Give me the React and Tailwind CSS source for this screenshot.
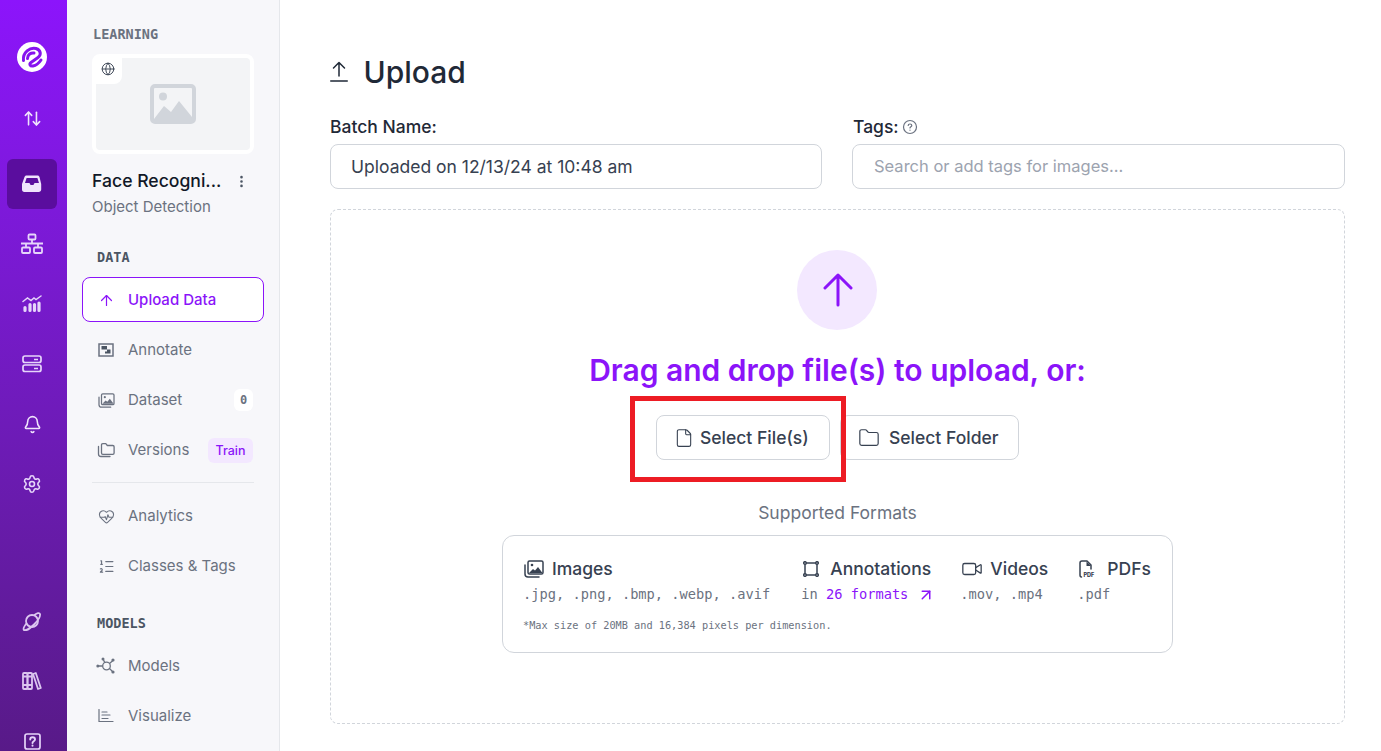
import { ArrowUp, ArrowUpDown, ArrowUpRight, Bell, EllipsisVertical, File, Folder, Globe, HeartPulse, ListOrdered, Settings, Video } from "lucide-react";

function Logo() {
  return (
    <svg width="30" height="30" viewBox="0 0 30 30" fill="none">
      <circle cx="15" cy="15" r="15" fill="white" />
      <path d="M6.500 18.500 C5.500 10.500 13 5 19 6.500 C24 8 24.500 13 21 15.500 L14 20.500 C12 22 13 24.500 16 24 C19 23.500 22 21 24 18" stroke="#8612ef" strokeWidth="3" strokeLinecap="round" />
      <path d="M10.500 16.500 C10.500 12.500 14 10.500 17 11" stroke="#8612ef" strokeWidth="3" strokeLinecap="round" />
    </svg>
  );
}

function InboxIcon() {
  return (
    <svg width="20" height="20" viewBox="0 0 20 20">
      <path fillRule="evenodd" fill="#efe3fc" d="M4.500 1.500h11c1 0 1.700.6 2 1.500l1.700 7v5.500c0 1.400-1.100 2.500-2.500 2.500H2.300C.9 18 0 16.900 0 15.500V10l2.500-7c.3-.9 1-1.500 2-1.500zM4.600 4 3 9h4c.5 0 .8.3 1 .7l.5 1.300h3l.5-1.300c.2-.4.5-.7 1-.7h4l-1.600-5H4.600z" />
    </svg>
  );
}

function NetworkIcon() {
  return (
    <svg width="24" height="22" viewBox="0 0 24 22" fill="none" stroke="#e6d5fa" strokeWidth="1.800">
      <rect x="8.500" y="1.500" width="7" height="5" rx="1" />
      <rect x="2" y="14.500" width="8" height="5.500" rx="1" />
      <rect x="14" y="14.500" width="8" height="5.500" rx="1" />
      <path d="M12 6.500v4M1 10.500h22" />
      <path d="M6 10.500v4M18 10.500v4" />
    </svg>
  );
}

function ChartIcon() {
  return (
    <svg width="20" height="18" viewBox="0 0 20 18" fill="none" stroke="#e6d5fa" strokeWidth="1.500" strokeLinecap="round">
      <path d="M1 6.500l4.500-3.500 3.500 2.500 3-2.500 2 1.500L19 1" />
      <path d="M3 12.500v3M8 9.500v6M12.500 9.500v6M17 8v7.500" strokeWidth="3.200" />
    </svg>
  );
}

function ServerIcon() {
  return (
    <svg width="20" height="18" viewBox="0 0 20 18" fill="none" stroke="#e6d5fa" strokeWidth="1.700">
      <rect x="1" y="1" width="18" height="6.500" rx="2" />
      <rect x="1" y="10" width="18" height="6.500" rx="2" />
      <path d="M12 4.500h4M12 13.500h4" strokeWidth="1.300" />
    </svg>
  );
}

function PlanetIcon() {
  return (
    <svg width="20" height="20" viewBox="0 0 20 20" fill="none" stroke="#dcc6f0" strokeWidth="1.800" strokeLinecap="round">
      <circle cx="10" cy="10" r="6" />
      <path d="M4.500 12.500 C2 15.500 1 18 2 19 C3.500 20 8 17.500 12 13.500 C16 9.500 18.500 5 18 3 C17.500 1.500 15 2 12.500 4" />
    </svg>
  );
}

function LibraryIcon() {
  return (
    <svg width="20" height="18" viewBox="0 0 20 18" fill="none" stroke="#dcc6f0" strokeWidth="1.800" strokeLinejoin="round">
      <rect x="1" y="1" width="4.500" height="16" rx="1" />
      <rect x="5.500" y="1" width="4.500" height="16" rx="1" />
      <path d="M11 2l2.800-1 5 15-2.800 1z" />
      <path d="M1 4.500h9M1 13h9" />
    </svg>
  );
}

function HelpIcon() {
  return (
    <svg width="17" height="17" viewBox="0 0 17 17" fill="none" stroke="#e6d5fa" strokeWidth="1.700" strokeLinecap="round">
      <rect x="1" y="1" width="15" height="15" rx="2" />
      <path d="M6.200 6.500c0-3 4.800-3 4.800 0 0 1.800-2.500 1.800-2.500 3.500" strokeWidth="1.900" />
      <path d="M8.500 12.600v.2" strokeWidth="2" />
    </svg>
  );
}

function AnnotateIcon() {
  return (
    <svg width="16" height="14" viewBox="0 0 16 14" fill="none" stroke="#6b7280" strokeWidth="1.500">
      <rect x="1" y="1" width="14" height="12" />
      <path d="M3.500 3h5.500v3.500h-5.500zM9 6.500h3.500v4h-5.500v-2h2z" fill="#4b5563" stroke="none" />
    </svg>
  );
}

function VersionsIcon() {
  return (
    <svg width="18" height="16" viewBox="0 0 18 16" fill="none" stroke="#6b7280" strokeWidth="1.300" strokeLinecap="round" strokeLinejoin="round">
      <path d="M4.500 11V3c0-.8.5-1.300 1.300-1.300h3l1.500 1.800h5.500c.8 0 1.300.5 1.300 1.300V11c0 .8-.5 1.300-1.300 1.300H5.800c-.8 0-1.300-.5-1.300-1.300z" />
      <path d="M1.500 4.500v7.500c0 1.500 1 2.500 2.500 2.500h9" />
    </svg>
  );
}

function ImagesStack({ color, width = 20, height = 18 }) {
  return (
    <svg width={width} height={height} viewBox="0 0 20 18" fill="none">
      <path d="M1 5v9c0 1.700 1.300 3 3 3h11" stroke={color} strokeWidth="1.500" strokeLinecap="round" />
      <rect x="4" y="1" width="15" height="13" rx="1.500" stroke={color} strokeWidth="1.500" />
      <circle cx="8" cy="5" r="1.300" fill={color} />
      <path d="M5 13l4-4 2 1.500 3-3.500 4.500 6z" fill={color} />
    </svg>
  );
}

function VisualizeIcon() {
  return (
    <svg width="16" height="14" viewBox="0 0 16 14" fill="none" stroke="#6b7280" strokeWidth="1.200" strokeLinecap="round">
      <path d="M1 0.500v12h14" />
      <path d="M4 3h5M4 6h8M4 9.500h6" />
    </svg>
  );
}

function ModelsIcon() {
  return (
    <svg width="20" height="18" viewBox="0 0 20 18" fill="none" stroke="#6b7280" strokeWidth="1.300">
      <circle cx="10.500" cy="9" r="3.800" />
      <path d="M7.500 3l1.300 2.600M17 3.500l-3.500 3M17 15l-3.500-3.500M2 9h4.700" />
      <circle cx="7" cy="2" r="1.500" fill="#6b7280" stroke="none" />
      <circle cx="17" cy="3" r="1.600" fill="#6b7280" stroke="none" />
      <circle cx="17" cy="15" r="1.600" fill="#6b7280" stroke="none" />
      <circle cx="1.800" cy="9" r="1.500" fill="#6b7280" stroke="none" />
    </svg>
  );
}

function PlaceholderImage() {
  return (
    <svg width="46" height="40" viewBox="0 0 46 40" fill="none">
      <rect x="2" y="2" width="42" height="36" rx="3" stroke="#d1d5db" strokeWidth="4" />
      <circle cx="13" cy="12.500" r="4" fill="#d1d5db" />
      <path d="M4 35 L14 22 L21 28 L29 17 L42 33 V36 H4z" fill="#d1d5db" />
    </svg>
  );
}

function ShapeIcon() {
  return (
    <svg width="16" height="16" viewBox="0 0 16 16" fill="none" stroke="#374151" strokeWidth="1.500">
      <path d="M2 2h12v12H2z" />
      <g fill="#fff">
        <circle cx="2" cy="2" r="1.300" />
        <circle cx="14" cy="2" r="1.300" />
        <circle cx="2" cy="14" r="1.300" />
        <circle cx="14" cy="14" r="1.300" />
      </g>
    </svg>
  );
}

function PdfIcon() {
  return (
    <svg width="18" height="18" viewBox="0 0 18 18" fill="none">
      <path d="M2 15V3c0-1 .7-2 2-2h5l4 4v4M2 15c0 1 .4 2 1.500 2" stroke="#374151" strokeWidth="1.500" strokeLinejoin="round" strokeLinecap="round" />
      <path d="M8.500 1.500V6h4.500z" fill="#374151" />
      <text x="5.500" y="16.500" fontSize="5.500" fontWeight="800" fill="#374151" fontFamily="Inter, sans-serif">PDF</text>
    </svg>
  );
}

function UploadTrayIcon() {
  return (
    <svg width="18" height="24" viewBox="0 0 18 24" fill="none" stroke="#1f2937" strokeWidth="1.500" strokeLinecap="round" strokeLinejoin="round">
      <path d="M9 16V2.500M3.500 8L9 2.500 14.500 8" />
      <path d="M0.750 21h16.500" />
    </svg>
  );
}

function RailItem({ children, active, className = "" }) {
  return (
    <div className={`w-[50px] h-[50px] shrink-0 flex items-center justify-center rounded-md ${active ? "bg-[#5a0d9e]" : ""} ${className}`}>
      {children}
    </div>
  );
}

function SectionLabel({ children, className = "" }) {
  return (
    <div className={`font-['DejaVu_Sans_Mono',monospace] text-[13.5px] leading-4 font-bold ${className}`}>
      {children}
    </div>
  );
}

function NavItem({ icon, label, right }) {
  return (
    <div className="h-[50px] flex items-center pl-[14px] pr-[11px] text-[15px] text-[#6b7280]">
      <span className="w-[20px] flex justify-center">{icon}</span>
      <span className="ml-[12px]">{label}</span>
      {right && <span className="ml-auto">{right}</span>}
    </div>
  );
}

function Format({ icon, title, children, gap = "gap-2", className = "" }) {
  return (
    <div className={className}>
      <div className={`flex items-center h-[24px] text-[17.5px] font-medium text-[#374151] ${gap}`}>
        {icon}
        <span>{title}</span>
      </div>
      <div className="mt-[3px] -ml-[1px] font-['DejaVu_Sans_Mono',monospace] text-[13.7px] leading-5 text-[#6b7280] whitespace-nowrap">
        {children}
      </div>
    </div>
  );
}

export default function App() {
  return (
    <div className="h-[751px] flex overflow-hidden bg-white font-['Inter',sans-serif]">
      <div className="w-[67px] shrink-0 flex flex-col pl-[7px] pt-[42px] overflow-hidden bg-gradient-to-b from-[#8c14fb] to-[#581a88]">
        <div className="w-[50px] flex justify-center shrink-0"><Logo /></div>
        <RailItem className="mt-[21px]"><ArrowUpDown size={19} color="#efe3fc" strokeWidth={2} /></RailItem>
        <RailItem active className="mt-[16px]"><InboxIcon /></RailItem>
        <RailItem className="mt-[10px]"><NetworkIcon /></RailItem>
        <RailItem className="mt-[10px]"><ChartIcon /></RailItem>
        <RailItem className="mt-[10px]"><ServerIcon /></RailItem>
        <RailItem className="mt-[10px]"><Bell size={19} color="#efe3fc" strokeWidth={2} /></RailItem>
        <RailItem className="mt-[10px]"><Settings size={20} color="#e6d5fa" strokeWidth={1.900} /></RailItem>
        <RailItem className="mt-[87px]"><PlanetIcon /></RailItem>
        <RailItem className="mt-[10px]"><LibraryIcon /></RailItem>
        <RailItem className="mt-[10px]"><HelpIcon /></RailItem>
      </div>

      <div className="w-[213px] shrink-0 bg-[#f7f7fa] border-r border-[#e5e7eb] pl-[15px] pr-[15px]">
        <SectionLabel className="mt-[26px] ml-[11px] text-[#6b7280]">LEARNING</SectionLabel>
        <div className="relative mt-[12px] ml-[10px] w-[162px] h-[100px] rounded-lg border-[4px] border-white bg-[#f3f4f6] flex items-center justify-center">
          <PlaceholderImage />
          <div className="absolute top-0 left-0 w-[26px] h-[26px] bg-white rounded-br-lg flex items-center pl-[5px] pb-[4px]">
            <Globe size={14} color="#374151" strokeWidth={1.600} />
          </div>
        </div>
        <div className="mt-[15px] ml-[10px] flex items-center w-[162px] pr-[5px]">
          <span className="text-[17.6px] leading-6 font-medium text-[#111827] whitespace-nowrap">Face Recogni...</span>
          <EllipsisVertical size={15} color="#4b5563" className="ml-auto shrink-0" strokeWidth={2.200} />
        </div>
        <div className="ml-[10px] mt-[4px] text-[15px] leading-5 text-[#6b7280]">Object Detection</div>

        <SectionLabel className="mt-[32px] ml-[15px] text-[#4b5563]">DATA</SectionLabel>
        <div className="mt-[12px] h-[45px] w-[182px] flex items-center pl-[13px] pt-[2px] rounded-lg border border-[#8b14f9] bg-white text-[15px] font-medium text-[#8b14f9]">
          <span className="w-[20px] flex justify-center"><ArrowUp size={17} strokeWidth={1.700} /></span>
          <span className="ml-[12px]">Upload Data</span>
        </div>
        <div className="mt-[3px]">
          <NavItem icon={<AnnotateIcon />} label="Annotate" />
          <NavItem
            icon={<ImagesStack color="#6b7280" width={17} height={15} />}
            label="Dataset"
            right={<span className="block w-[19px] h-[22px] rounded-md bg-white text-center font-['DejaVu_Sans_Mono',monospace] text-[12px] leading-[22px] font-bold text-[#6b7280]">0</span>}
          />
          <NavItem
            icon={<VersionsIcon />}
            label="Versions"
            right={<span className="block w-[45px] h-[25px] rounded-md bg-[#f3e8ff] text-center text-[12.500px] leading-[25px] font-medium text-[#8b14f9]">Train</span>}
          />
        </div>
        <div className="mt-[7px] ml-[10px] w-[162px] h-px bg-[#e5e7eb]" />
        <div className="mt-[8px]">
          <NavItem icon={<HeartPulse size={17} strokeWidth={1.500} />} label="Analytics" />
          <NavItem icon={<ListOrdered size={17} strokeWidth={1.700} />} label="Classes & Tags" />
        </div>
        <SectionLabel className="mt-[24px] ml-[15px] text-[#4b5563]">MODELS</SectionLabel>
        <div className="mt-[10px]">
          <NavItem icon={<ModelsIcon />} label="Models" />
          <NavItem icon={<VisualizeIcon />} label="Visualize" />
        </div>
      </div>

      <div className="relative flex-1 min-w-0 pl-[50px] pr-[36px]">
        <div className="mt-[52px] flex items-center h-[40px]">
          <UploadTrayIcon />
          <h1 className="ml-[15.5px] text-[30px] leading-10 font-medium text-[#1f2937]">Upload</h1>
        </div>

        <div className="mt-[23px] grid grid-cols-[492px_1fr] gap-[30px]">
          <div>
            <label className="block text-[17.5px] leading-6 font-medium text-[#1f2937]">Batch Name:</label>
            <div className="mt-[5px] h-[45px] flex items-center px-[20px] pt-[2px] rounded-lg border border-[#d1d5db] text-[17.5px] text-[#374151]">
              Uploaded on 12/13/24 at 10:48 am
            </div>
          </div>
          <div>
            <label className="ml-[1px] flex items-center gap-[3px] text-[17.5px] leading-6 font-medium text-[#1f2937]">
              Tags:
              <svg width="16" height="16" viewBox="0 0 16 16" fill="none" stroke="#6b7280" strokeWidth="1.200" strokeLinecap="round">
                <circle cx="8" cy="8" r="6.500" />
                <path d="M6.200 6.500c0-2 3.600-2 3.600 0 0 1.300-1.800 1.300-1.800 2.500M8 11v.2" />
              </svg>
            </label>
            <div className="mt-[5px] h-[45px] flex items-center pl-[21px] rounded-lg border border-[#d1d5db] text-[16.500px] text-[#9ca3af]">
              Search or add tags for images...
            </div>
          </div>
        </div>

        <div className="mt-[20px] h-[515px] rounded-lg border border-dashed border-[#d1d5db] flex flex-col items-center pt-[40px]">
          <div className="w-[80px] h-[80px] mr-[1px] rounded-full bg-[#f3e8ff] flex items-center justify-center">
            <svg className="ml-[1px]" width="30" height="34" viewBox="0 0 30 34" fill="none" stroke="#8b14f9" strokeWidth="3" strokeLinecap="round" strokeLinejoin="round">
              <path d="M15 32V2M2 15L15 2l13 13" />
            </svg>
          </div>
          <div className="mt-[20px] text-[30px] leading-[41px] font-semibold text-[#8b14f9]">Drag and drop file(s) to upload, or:</div>
          <div className="mt-[24px] flex gap-[10px]">
            <button className="w-[174px] h-[45px] flex items-center pl-[17px] pt-[1px] gap-[6px] rounded-lg border border-[#d1d5db] text-[17.5px] font-medium text-[#374151]">
              <File size={20} strokeWidth={1.300} />
              Select File(s)
            </button>
            <button className="w-[179px] h-[45px] flex items-center pl-[17px] pt-[1px] gap-[9px] rounded-lg border border-[#d1d5db] text-[17.5px] font-medium text-[#374151]">
              <Folder size={22} strokeWidth={1.300} />
              Select Folder
            </button>
          </div>
          <div className="mt-[41px] text-[17.5px] leading-6 text-[#6b7280]">Supported Formats</div>
          <div className="mt-[10px] w-[671px] h-[118px] rounded-xl border border-[#d1d5db] px-[21px] pt-[21px]">
            <div className="flex gap-[30px]">
              <Format icon={<ImagesStack color="#374151" />} title="Images">.jpg, .png, .bmp, .webp, .avif</Format>
              <Format className="ml-[1px]" icon={<span className="ml-[2px] flex"><ShapeIcon /></span>} title="Annotations" gap="gap-[11px]">
                <span className="ml-[1px]">in </span><span className="text-[#8b14f9]">26 formats</span>
                <ArrowUpRight size={18} color="#8b14f9" className="inline -my-1 ml-[9px] -mr-[4px]" strokeWidth={2} />
              </Format>
              <Format icon={<Video size={22} strokeWidth={1.400} color="#374151" />} title="Videos" gap="gap-[7px]">.mov, .mp4</Format>
              <Format icon={<PdfIcon />} title="PDFs" gap="gap-[11px]">.pdf</Format>
            </div>
            <div className="mt-[13px] -ml-[1px] font-['DejaVu_Sans_Mono',monospace] text-[10.250px] leading-4 text-[#6b7280]">
              *Max size of 20MB and 16,384 pixels per dimension.
            </div>
          </div>
        </div>

        <div className="absolute left-[350px] top-[396px] w-[216px] h-[86px] border-[5px] border-[#ed1c24]" />
      </div>
    </div>
  );
}
